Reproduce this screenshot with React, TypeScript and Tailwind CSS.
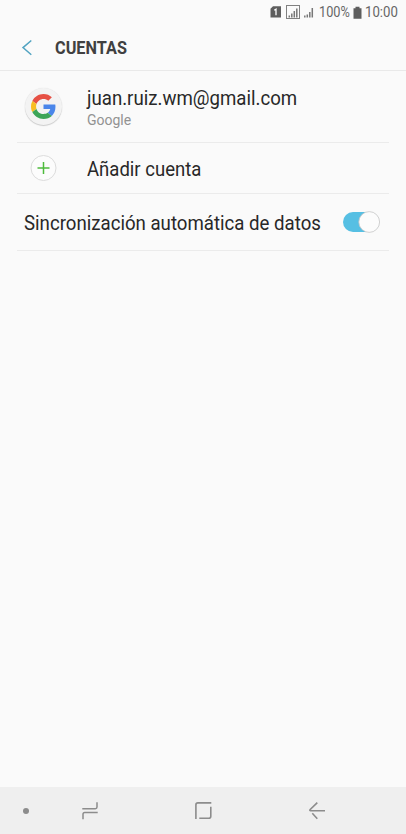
import { useState } from "react";

function StatusBar(){
    return (
        <div className="h-[25px] flex shrink-0 items-center text-[#666666]">
            <svg className="ml-[270px] shrink-0" width="44" height="15" viewBox="0 0 44 15">
                <path d="M3 1.2h8v11.3H.5V3.7z" fill="#5e5e5e"/>
                <path d="M4.2 5.2l1.8-1v6" fill="none" stroke="#fff" strokeWidth="1.3"/>
                <rect x="16.5" y=".5" width="13" height="13" fill="none" stroke="#808080" strokeWidth="1"/>
                <path d="M19.3 12.5v-2M21.8 12.5V8.5M24.3 12.5V6M26.8 12.5V3.5" stroke="#777" strokeWidth="1.5"/>
                <path d="M34.8 12.5v-2M37.3 12.5V9.5M39.8 12.5V7M42.3 12.5V3" stroke="#777" strokeWidth="1.5"/>
            </svg>
            <span className="ml-[5px] w-[31px] shrink-0 whitespace-nowrap text-[14.5px] leading-[20px]">
                <span className="inline-block origin-left scale-x-[0.88]">100%</span>
            </span>
            <svg className="ml-[3px] shrink-0" width="9" height="14" viewBox="0 0 9 14">
                <path d="M2.5 .8h4v1.5h2v10.5h-8V2.3h2z" fill="#5e5e5e"/>
            </svg>
            <span className="ml-[3px] w-[34px] shrink-0 whitespace-nowrap text-[14.5px] leading-[20px]">
                <span className="inline-block origin-left scale-x-[0.91]">10:00</span>
            </span>
        </div>
    )
}

function GoogleLogo(){
    return (
        <div className="w-[37px] h-[37px] rounded-full bg-[#f3f3f3] flex items-center justify-center
            shadow-[0_1px_1px_#cccccc,0_0_1px_#dddddd]">
            <svg width="25" height="25" viewBox="0 0 48 48">
                <path fill="#E65044" d="M24 9.5c3.54 0 6.71 1.22 9.21 3.6l6.85-6.85C35.9 2.38 30.47 0 24 0 14.62 0 6.51 5.38 2.56 13.22l7.98 6.19C12.43 13.72 17.74 9.5 24 9.5z"/>
                <path fill="#4A86EA" d="M46.98 24.55c0-1.57-.15-3.09-.38-4.55H24v9.02h12.94c-.58 2.96-2.26 5.48-4.78 7.18l7.73 6c4.51-4.18 7.09-10.36 7.09-17.65z"/>
                <path fill="#F8BD22" d="M10.53 28.59A14.5 14.5 0 0 1 9.77 24c0-1.6.27-3.14.76-4.59l-7.98-6.19A23.9 23.9 0 0 0 0 24c0 3.88.92 7.54 2.56 10.78z"/>
                <path fill="#3DA558" d="M24 48c6.48 0 11.93-2.13 15.89-5.81l-7.73-6c-2.15 1.45-4.92 2.3-8.16 2.3-6.26 0-11.57-4.22-13.47-9.91l-7.98 6.19C6.51 42.62 14.62 48 24 48z"/>
            </svg>
        </div>
    )
}

export default function AccountsPage(){
    const [autoSync, setAutoSync]=useState<boolean>(true);

    return (
        <div className="h-screen w-full overflow-hidden flex flex-col bg-[#fafafa] text-[#282828]
            font-['Roboto',sans-serif]">
            <StatusBar/>
            <header className="h-[46px] shrink-0 flex items-center border-b border-[#e9e9e9]">
                <svg className="ml-[21px] shrink-0" width="12" height="18" viewBox="0 0 12 18">
                    <path d="M10.3 1.5L2 8.6l8.3 7.2" fill="none" stroke="#51a3c1" strokeWidth="1.5"/>
                </svg>
                <h1 className="ml-[22px] pt-[2px] origin-left scale-x-[0.87] text-[18.7px] font-bold text-[#404040]">
                    CUENTAS
                </h1>
            </header>
            <main className="flex-1 ml-[17px] mr-[17px]">
                <div className="h-[72px] flex items-center border-b border-[#ebebeb]">
                    <div className="ml-2 w-[62px]"><GoogleLogo/></div>
                    <div className="whitespace-nowrap pt-[2px]">
                        <p className="origin-left scale-x-[0.956] text-[19.5px] leading-[24px]">juan.ruiz.wm@gmail.com</p>
                        <p className="text-[14px] leading-[18px] text-[#929292]">Google</p>
                    </div>
                </div>
                <div className="h-[51px] flex items-center border-b border-[#ebebeb]">
                    <div className="ml-[13px] w-[57px]">
                        <svg width="27" height="27" viewBox="0 0 27 27">
                            <circle cx="13.5" cy="13" r="12.5" fill="#fcfcfc" stroke="#dcdcdc"/>
                            <path d="M13.5 7v12M7.5 13h12" stroke="#4dbb3c" strokeWidth="1.5"/>
                        </svg>
                    </div>
                    <p className="pt-[3px] origin-left scale-x-[0.95] text-[19.5px] whitespace-nowrap">Añadir cuenta</p>
                </div>
                <div className="h-[57px] flex items-center border-b border-[#ebebeb]">
                    <p className="ml-[7px] w-[302px] pt-[3px] origin-left scale-x-[0.956] text-[19.5px] whitespace-nowrap">
                        Sincronización automática de datos
                    </p>
                    <button className="ml-[17px] w-[37px] h-[22px] shrink-0" role="switch"
                        aria-checked={autoSync} onClick={()=>setAutoSync(!autoSync)}>
                        <svg width="37" height="22" viewBox="0 0 37 22">
                            <rect x="0" y="1" width="36" height="20" rx="10" fill={autoSync ? "#56bfe3" : "#cccccc"}/>
                            <circle cx={autoSync ? 26.2 : 10.8} cy="11" r="10.4" fill="#fcfcfc" stroke="#c6c6c6" strokeWidth=".8"/>
                        </svg>
                    </button>
                </div>
            </main>
            <nav className="h-[47px] shrink-0 flex items-center bg-[#efefef]">
                <div className="ml-[23px] w-[6px] h-[6px] rounded-full bg-[#8c8c8c]"/>
                <svg className="ml-[53px]" width="16" height="18" viewBox="0 0 16 18"
                    fill="none" stroke="#8c8c8c" strokeWidth="1.5">
                    <path d="M.3 6.7h13q1.7 0 1.7-1.7V.2"/>
                    <path d="M15.7 10.6H2.7Q1 10.6 1 12.3v5"/>
                </svg>
                <svg className="ml-[97px]" width="17" height="18" viewBox="0 0 17 18"
                    fill="none" stroke="#8c8c8c" strokeWidth="1.6">
                    <path d="M.9 17V2.9Q.9 .9 2.9 .9h13.4"/>
                    <path d="M15.8 4.8v9.4q0 2-2 2H4.3"/>
                </svg>
                <svg className="ml-[97px]" width="17" height="18" viewBox="0 0 17 18"
                    fill="none" stroke="#8c8c8c" strokeWidth="1.6">
                    <path d="M8.3 .6L1 7.8q-.5.9.5.9H16M3.3 11.3l5 5.4"/>
                </svg>
            </nav>
        </div>
    )
}
